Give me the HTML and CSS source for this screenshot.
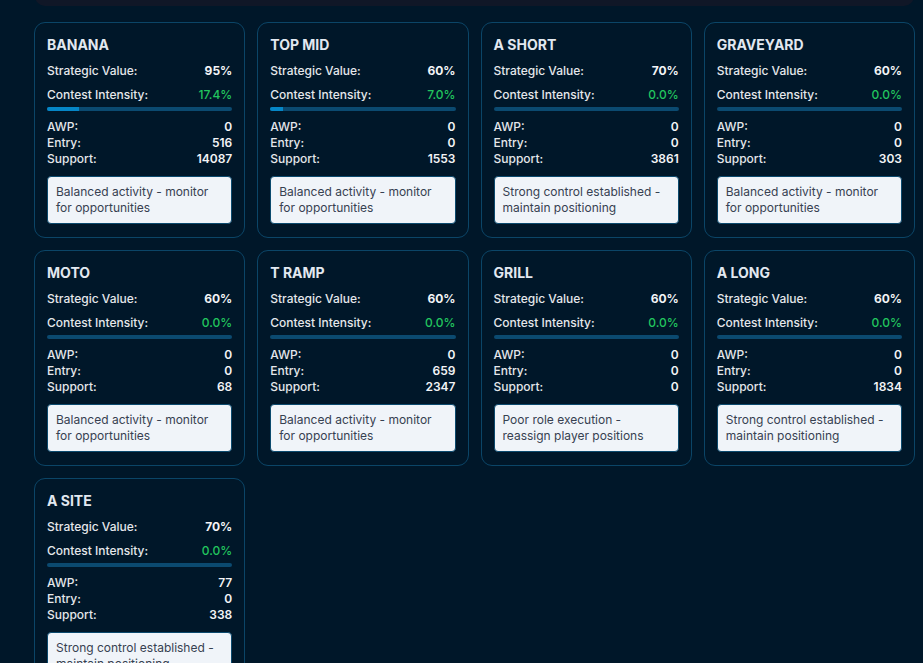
FILE: index.html
```html
<!DOCTYPE html>
<html>
<head>
<meta charset="utf-8">
<link rel="stylesheet" href="styles.css">
</head>
<body>
<div class="page">
  <div class="prev-panel"></div>
  <div class="grid">
    <div class="card">
      <div class="title">BANANA</div>
      <div class="row"><span class="label">Strategic Value:</span><span class="value">95%</span></div>
      <div class="row"><span class="label">Contest Intensity:</span><span class="pct">17.4%</span></div>
      <div class="bar"><div class="fill" style="width:17.4%"></div></div>
      <div class="stats">
        <div class="stat"><span class="label">AWP:</span><span class="value">0</span></div>
        <div class="stat"><span class="label">Entry:</span><span class="value">516</span></div>
        <div class="stat"><span class="label">Support:</span><span class="value">14087</span></div>
      </div>
      <div class="note">Balanced activity - monitor for opportunities</div>
    </div>
    <div class="card">
      <div class="title">TOP MID</div>
      <div class="row"><span class="label">Strategic Value:</span><span class="value">60%</span></div>
      <div class="row"><span class="label">Contest Intensity:</span><span class="pct">7.0%</span></div>
      <div class="bar"><div class="fill" style="width:7%"></div></div>
      <div class="stats">
        <div class="stat"><span class="label">AWP:</span><span class="value">0</span></div>
        <div class="stat"><span class="label">Entry:</span><span class="value">0</span></div>
        <div class="stat"><span class="label">Support:</span><span class="value">1553</span></div>
      </div>
      <div class="note">Balanced activity - monitor for opportunities</div>
    </div>
    <div class="card">
      <div class="title">A SHORT</div>
      <div class="row"><span class="label">Strategic Value:</span><span class="value">70%</span></div>
      <div class="row"><span class="label">Contest Intensity:</span><span class="pct">0.0%</span></div>
      <div class="bar"><div class="fill" style="width:0%"></div></div>
      <div class="stats">
        <div class="stat"><span class="label">AWP:</span><span class="value">0</span></div>
        <div class="stat"><span class="label">Entry:</span><span class="value">0</span></div>
        <div class="stat"><span class="label">Support:</span><span class="value">3861</span></div>
      </div>
      <div class="note">Strong control established - maintain positioning</div>
    </div>
    <div class="card">
      <div class="title">GRAVEYARD</div>
      <div class="row"><span class="label">Strategic Value:</span><span class="value">60%</span></div>
      <div class="row"><span class="label">Contest Intensity:</span><span class="pct">0.0%</span></div>
      <div class="bar"><div class="fill" style="width:0%"></div></div>
      <div class="stats">
        <div class="stat"><span class="label">AWP:</span><span class="value">0</span></div>
        <div class="stat"><span class="label">Entry:</span><span class="value">0</span></div>
        <div class="stat"><span class="label">Support:</span><span class="value">303</span></div>
      </div>
      <div class="note">Balanced activity - monitor for opportunities</div>
    </div>
    <div class="card">
      <div class="title">MOTO</div>
      <div class="row"><span class="label">Strategic Value:</span><span class="value">60%</span></div>
      <div class="row"><span class="label">Contest Intensity:</span><span class="pct">0.0%</span></div>
      <div class="bar"><div class="fill" style="width:0%"></div></div>
      <div class="stats">
        <div class="stat"><span class="label">AWP:</span><span class="value">0</span></div>
        <div class="stat"><span class="label">Entry:</span><span class="value">0</span></div>
        <div class="stat"><span class="label">Support:</span><span class="value">68</span></div>
      </div>
      <div class="note">Balanced activity - monitor for opportunities</div>
    </div>
    <div class="card">
      <div class="title">T RAMP</div>
      <div class="row"><span class="label">Strategic Value:</span><span class="value">60%</span></div>
      <div class="row"><span class="label">Contest Intensity:</span><span class="pct">0.0%</span></div>
      <div class="bar"><div class="fill" style="width:0%"></div></div>
      <div class="stats">
        <div class="stat"><span class="label">AWP:</span><span class="value">0</span></div>
        <div class="stat"><span class="label">Entry:</span><span class="value">659</span></div>
        <div class="stat"><span class="label">Support:</span><span class="value">2347</span></div>
      </div>
      <div class="note">Balanced activity - monitor for opportunities</div>
    </div>
    <div class="card">
      <div class="title">GRILL</div>
      <div class="row"><span class="label">Strategic Value:</span><span class="value">60%</span></div>
      <div class="row"><span class="label">Contest Intensity:</span><span class="pct">0.0%</span></div>
      <div class="bar"><div class="fill" style="width:0%"></div></div>
      <div class="stats">
        <div class="stat"><span class="label">AWP:</span><span class="value">0</span></div>
        <div class="stat"><span class="label">Entry:</span><span class="value">0</span></div>
        <div class="stat"><span class="label">Support:</span><span class="value">0</span></div>
      </div>
      <div class="note">Poor role execution - reassign player positions</div>
    </div>
    <div class="card">
      <div class="title">A LONG</div>
      <div class="row"><span class="label">Strategic Value:</span><span class="value">60%</span></div>
      <div class="row"><span class="label">Contest Intensity:</span><span class="pct">0.0%</span></div>
      <div class="bar"><div class="fill" style="width:0%"></div></div>
      <div class="stats">
        <div class="stat"><span class="label">AWP:</span><span class="value">0</span></div>
        <div class="stat"><span class="label">Entry:</span><span class="value">0</span></div>
        <div class="stat"><span class="label">Support:</span><span class="value">1834</span></div>
      </div>
      <div class="note">Strong control established - maintain positioning</div>
    </div>
    <div class="card">
      <div class="title">A SITE</div>
      <div class="row"><span class="label">Strategic Value:</span><span class="value">70%</span></div>
      <div class="row"><span class="label">Contest Intensity:</span><span class="pct">0.0%</span></div>
      <div class="bar"><div class="fill" style="width:0%"></div></div>
      <div class="stats">
        <div class="stat"><span class="label">AWP:</span><span class="value">77</span></div>
        <div class="stat"><span class="label">Entry:</span><span class="value">0</span></div>
        <div class="stat"><span class="label">Support:</span><span class="value">338</span></div>
      </div>
      <div class="note">Strong control established - maintain positioning</div>
    </div>
  </div>
</div>
</body>
</html>
```
FILE: styles.css
```css
html, body {
  margin: 0;
  padding: 0;
  background: #001729;
  font-family: Inter, "Noto Sans", "Liberation Sans", sans-serif;
  overflow: hidden;
}

.page {
  padding: 0 8px 40px 34px;
}

.prev-panel {
  height: 30px;
  margin: -24px 1px 16px 1px;
  background: #101727;
  border-radius: 10px;
}

.grid {
  display: grid;
  grid-template-columns: repeat(4, 1fr);
  gap: 12px;
}

.card {
  border: 1px solid #0b4567;
  border-radius: 11px;
  padding: 12px 12px 13px 12px;
  display: flex;
  flex-direction: column;
}

.title {
  font-size: 14px;
  line-height: 20px;
  font-weight: 700;
  color: #e2e8f0;
  margin-bottom: 8px;
}

.row {
  display: flex;
  justify-content: space-between;
  font-size: 12px;
  line-height: 16px;
  margin-bottom: 8px;
}

.row + .row {
  margin-bottom: 4px;
}

.label {
  color: #e5e7eb;
  font-weight: 500;
}

.value {
  color: #f3f4f6;
  font-weight: 700;
}

.pct {
  color: #22c55e;
  font-weight: 500;
}

.bar {
  height: 4px;
  border-radius: 2px;
  background: #0b4a70;
  overflow: hidden;
  margin-bottom: 8px;
}

.fill {
  height: 100%;
  background: #0586c6;
}

.stats {
  display: flex;
  flex-direction: column;
  margin-bottom: 9px;
}

.stat {
  display: flex;
  justify-content: space-between;
  font-size: 12px;
  line-height: 16px;
}

.stat .value {
  font-weight: 600;
}

.note {
  background: #f0f4f9;
  border: 1px solid #0c4a6e;
  border-radius: 4px;
  padding: 7px 8px;
  font-size: 12px;
  line-height: 16px;
  color: #374151;
}
```
